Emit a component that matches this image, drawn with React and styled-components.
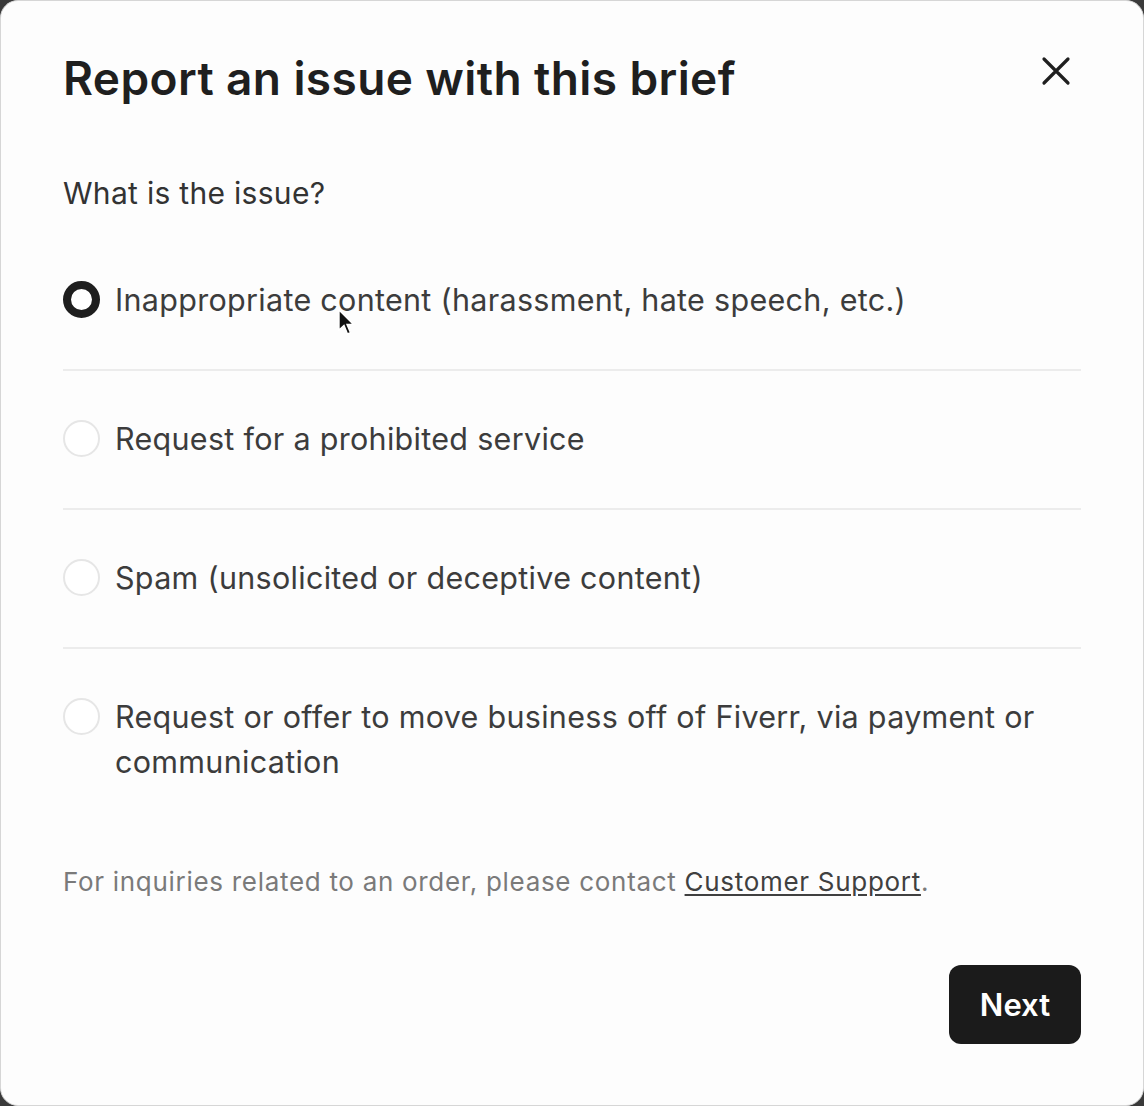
import React, { useState } from 'react'
import styled, { createGlobalStyle } from 'styled-components'

const Global = createGlobalStyle`
  html, body {
    margin: 0;
    padding: 0;
    background: #3a3a3a;
  }
  * { box-sizing: border-box; }
`

const Modal = styled.div`
  position: relative;
  width: 1144px;
  height: 1106px;
  background: #fdfdfd;
  border-radius: 18px;
  border: 1px solid #d6d6d6;
  padding: 49px 62px 0 62px;
  font-family: Inter, "Liberation Sans", sans-serif;
  color: #222325;
  display: flex;
  flex-direction: column;
`

const Header = styled.div`
  display: flex;
  justify-content: space-between;
  align-items: flex-start;
`

const Title = styled.h1`
  margin: 0;
  font-size: 46px;
  font-weight: 600;
  line-height: 56px;
  letter-spacing: 0.4px;
  color: #1f1f1f;
`

const Close = styled.button`
  background: none;
  border: none;
  padding: 0;
  margin-right: 3px;
  margin-top: -1px;
  cursor: pointer;
  display: flex;
`

const Question = styled.p`
  margin: 67px 0 0 0;
  font-size: 30px;
  line-height: 40px;
  letter-spacing: 0.3px;
  color: #333;
`

const List = styled.div`
  margin-top: 64px;
  display: flex;
  flex-direction: column;
`

const Option = styled.label`
  display: flex;
  align-items: flex-start;
  gap: 15px;
  padding: ${p => (p.$first ? '0' : '45px')} 0 ${p => (p.$last ? '0' : '47px')} 0;
  border-bottom: ${p => (p.$last ? 'none' : '2px solid #ececec')};
  cursor: pointer;
`

const Radio = styled.span`
  flex: none;
  width: 37px;
  height: 37px;
  margin-top: 4px;
  border-radius: 50%;
  border: ${p => (p.$on ? '8px solid #1e1e1e' : '2px solid #e6e6e6')};
  background: #fff;
`

const OptionText = styled.span`
  font-size: 30.5px;
  line-height: 45px;
  letter-spacing: 0.3px;
  color: #3c3c3c;
`

const Note = styled.p`
  margin: 81px 0 0 0;
  font-size: 26px;
  line-height: 34px;
  letter-spacing: 0.7px;
  color: #7a7a7a;

  a {
    color: #404040;
    text-decoration: underline;
    text-underline-offset: 3px;
  }
`

const Footer = styled.div`
  margin-top: 66px;
  display: flex;
  justify-content: flex-end;
`

const NextButton = styled.button`
  width: 132px;
  height: 79px;
  border: none;
  border-radius: 12px;
  background: #1b1b1b;
  color: #fff;
  font-family: Inter, "Liberation Sans", sans-serif;
  font-size: 31px;
  font-weight: 600;
  cursor: pointer;
`

const Pointer = styled.svg`
  position: absolute;
  left: 336px;
  top: 308px;
  pointer-events: none;
`

const options = [
  'Inappropriate content (harassment, hate speech, etc.)',
  'Request for a prohibited service',
  'Spam (unsolicited or deceptive content)',
  'Request or offer to move business off of Fiverr, via payment or communication',
]

export default function App() {
  const [picked, setPicked] = useState(0)

  return (
    <>
      <Global />
      <Modal>
        <Header>
          <Title>Report an issue with this brief</Title>
          <Close aria-label="Close">
            <svg width="44" height="44" viewBox="0 0 44 44">
              <path d="M10 10 L34 34 M34 10 L10 34" stroke="#1f1f1f" strokeWidth="3.2" strokeLinecap="round" />
            </svg>
          </Close>
        </Header>

        <Question>What is the issue?</Question>

        <List>
          {options.map((o, i) => (
            <Option key={i} $first={i === 0} $last={i === options.length - 1} onClick={() => setPicked(i)}>
              <Radio $on={picked === i} />
              <OptionText>{o}</OptionText>
            </Option>
          ))}
        </List>

        <Note>
          For inquiries related to an order, please contact <a href="#">Customer Support</a>.
        </Note>

        <Footer>
          <NextButton>Next</NextButton>
        </Footer>

        <Pointer width="18" height="28" viewBox="0 0 18 28">
          <path d="M2 1 L2 21 L7 16.5 L10.5 25 L13.5 23.6 L10 15.5 L16.5 15.5 Z" fill="#111" stroke="#fff" strokeWidth="1.4" />
        </Pointer>
      </Modal>
    </>
  )
}
